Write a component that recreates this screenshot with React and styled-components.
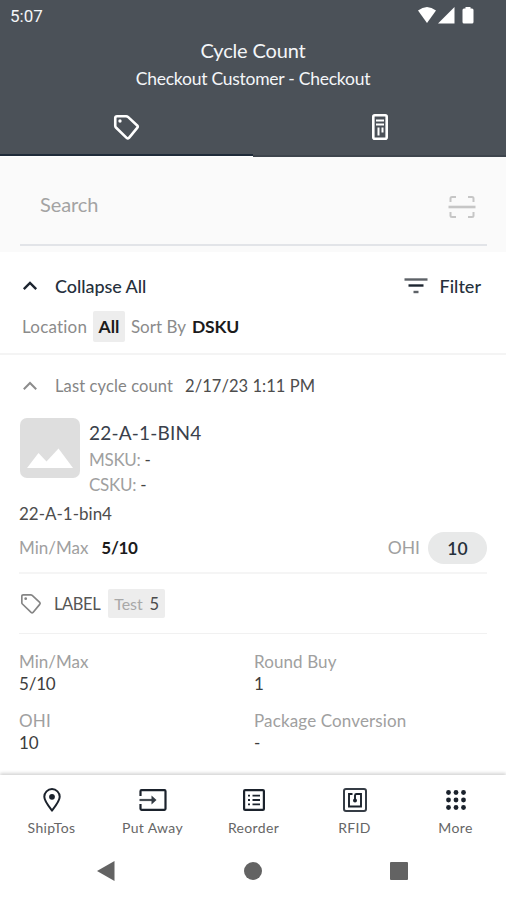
import styled, { createGlobalStyle } from 'styled-components';

const navItems = [
	{ label: 'ShipTos', icon: <PinIcon /> },
	{ label: 'Put Away', icon: <PutAwayIcon /> },
	{ label: 'Reorder', icon: <ReorderIcon /> },
	{ label: 'RFID', icon: <RfidIcon /> },
	{ label: 'More', icon: <MoreIcon /> },
];

const details = [
	{ label: 'Min/Max', value: '5/10', ls: 0 },
	{ label: 'Round Buy', value: '1', ls: 0.1 },
	{ label: 'OHI', value: '10', ls: 0.2 },
	{ label: 'Package Conversion', value: '-', ls: 0.14 },
];

function App() {
	return (
		<Screen>
			<GlobalStyle />
			<Header>
				<StatusBar>
					<Clock>5:07</Clock>
					<StatusIcons />
				</StatusBar>
				<Title>Cycle Count</Title>
				<Subtitle>Checkout Customer - Checkout</Subtitle>
			</Header>
			<Tabs>
				<Tab $active>
					<TagIcon size={27} stroke="#fff" width={2.3} />
				</Tab>
				<Tab>
					<BinIcon />
				</Tab>
			</Tabs>

			<SearchArea>
				<SearchField>
					<Text $size={20} $ls={-0.1} $color="#a3a3a3">Search</Text>
					<ScanIcon />
				</SearchField>
			</SearchArea>

			<Toolbar>
				<Chevron color="#1c2530" width={2.4} />
				<Text $size={18} $ls={-0.05} $weight={500} $color="#26303c">Collapse All</Text>
				<FilterButton>
					<FilterIcon />
					<Text $size={18} $weight={500} $color="#26303c">Filter</Text>
				</FilterButton>
			</Toolbar>
			<SortRow>
				<Text $size={17} $ls={0.2} $color="#8b8b8b">Location</Text>
				<Chip $h={31} $pad={5.5}>
					<Text $size={17.5} $weight={700} $color="#1b1b1b">All</Text>
				</Chip>
				<Text $size={17} $color="#8b8b8b">Sort By</Text>
				<Text $size={17.5} $ls={-0.2} $weight={700} $color="#1b1b1b">DSKU</Text>
			</SortRow>

			<Card>
				<CountRow>
					<Chevron color="#8c8c8c" width={2} />
					<Text $size={16.5} $ls={0.12} $color="#858585">Last cycle count</Text>
					<Text $size={16.5} $ls={0.05} $color="#4d4d4d">2/17/23 1:11 PM</Text>
				</CountRow>
				<Product>
					<Placeholder />
					<ProductInfo>
						<Text $size={19} $ls={0.2} $lh={29} $color="#3a414b">22-A-1-BIN4</Text>
						<Sku>MSKU: <b>-</b></Sku>
						<Sku>CSKU: <b>-</b></Sku>
					</ProductInfo>
				</Product>
				<Text $size={17} $lh={30} $color="#4d4d4d">22-A-1-bin4</Text>
				<StockRow>
					<Text $size={17} $color="#a0a0a0">Min/Max</Text>
					<Text $size={17} $ls={-0.3} $weight={700} $color="#1b1b1b">5/10</Text>
					<Stock>
						<Text $size={17.5} $color="#a0a0a0">OHI</Text>
						<Pill>10</Pill>
					</Stock>
				</StockRow>
				<LabelRow>
					<TagIcon size={22} stroke="#858585" width={1.8} />
					<Text $size={16.5} $ls={-0.4} $color="#555">LABEL</Text>
					<Chip $h={29} $pad={6}>
						<Text $size={16} $ls={-0.1} $color="#a8a8a8">Test</Text>
						<Text $size={16.5} $color="#4a4a4a">5</Text>
					</Chip>
				</LabelRow>
				<Details>
					{details.map((d) => (
						<Detail key={d.label}>
							<Text $size={17} $ls={d.ls} $lh={22} $color="#a0a0a0">{d.label}</Text>
							<Text $size={17} $ls={-0.2} $lh={22} $color="#3d3d3d">{d.value}</Text>
						</Detail>
					))}
				</Details>
			</Card>

			<BottomNav>
				{navItems.map((item) => (
					<NavItem key={item.label}>
						{item.icon}
						<span>{item.label}</span>
					</NavItem>
				))}
			</BottomNav>
			<SystemNav>
				<svg width="18" height="20"><path d="M0 10 17.5 0v20z" fill="#636363" /></svg>
				<svg width="18" height="18"><circle cx="9" cy="9" r="9" fill="#636363" /></svg>
				<svg width="18" height="18"><rect width="18" height="18" rx="1" fill="#636363" /></svg>
			</SystemNav>
		</Screen>
	);
}

export default App;

/* icons */

function StatusIcons() {
	return (
		<svg width="56" height="18" viewBox="0 0 56 18" fill="#fff">
			<path d="M0 3.500Q9-3.500 18 3.500L9 16z" />
			<path d="M36.500 0v16.500H20z" />
			<path d="M44.500 3q0-1.500 1.500-1.500h1.500V0h5v1.500H54q1.500 0 1.500 1.500v12q0 1.500-1.500 1.500h-8q-1.500 0-1.500-1.500z" />
		</svg>
	);
}

function TagIcon({ size, stroke, width }) {
	return (
		<svg width={size} height={size} viewBox="0 0 24 24" fill="none" stroke={stroke} strokeWidth={width} strokeLinejoin="round">
			<path d="M2 3.500Q2 2 3.500 2h8.200q.9 0 1.600.6l8.200 7.600q1 1.100 0 2.200l-7.300 8.800q-1 1-2.100 0l-9.500-9.200q-.6-.6-.6-1.500z" />
			<circle cx="6.200" cy="6.200" r="1.500" fill={stroke} stroke="none" />
		</svg>
	);
}

function BinIcon() {
	return (
		<svg width="16" height="26" viewBox="0 0 16 26" fill="none" stroke="#fff">
			<rect x="1.300" y="1.300" width="13.400" height="23.400" rx="1.500" strokeWidth="2.600" />
			<path d="M4 6.500h8M4 10.500h8" strokeWidth="1.800" />
			<path d="M6.500 13.500v8M10.500 13.500v5" strokeWidth="2" />
		</svg>
	);
}

function ScanIcon() {
	return (
		<svg width="28" height="24" viewBox="0 0 28 24" fill="none" stroke="#c6c6c6" strokeWidth="2">
			<path d="M2.500 7V3.500q0-1.500 1.500-1.500H8M20 2h4q1.500 0 1.500 1.500V7M25.500 17v3.500q0 1.500-1.500 1.500h-4M8 22H4q-1.500 0-1.500-1.500V17" />
			<path d="M.5 12h27" strokeWidth="2.600" />
		</svg>
	);
}

function Chevron({ color, width }) {
	return (
		<svg width="16" height="10" viewBox="0 0 16 10" fill="none" stroke={color} strokeWidth={width}>
			<path d="M1.800 8.200 8 2l6.200 6.200" />
		</svg>
	);
}

function FilterIcon() {
	return (
		<svg width="24" height="18" viewBox="0 0 24 18" fill="none" strokeWidth="2.400">
			<path d="M.5 2.500h23" stroke="#5d6267" />
			<path d="M4.500 8.500h15" stroke="#1c2530" />
			<path d="M9.500 15h5" stroke="#5d6267" />
		</svg>
	);
}

function Placeholder() {
	return (
		<svg width="60" height="60" viewBox="0 0 60 60">
			<rect width="60" height="60" rx="7" fill="#dedede" />
			<path d="M7 50 18.500 35l8 8.500L38.500 30.500 53 50z" fill="#fff" />
		</svg>
	);
}

function PinIcon() {
	return (
		<svg width="18" height="24" viewBox="0 0 18 24" fill="none" stroke="#1b222c" strokeWidth="2">
			<path d="M9 22.500C5 17.500 1.300 13 1.300 8.800a7.700 7.700 0 0 1 15.400 0C16.700 13 13 17.500 9 22.500z" />
			<circle cx="9" cy="8.800" r="2.900" fill="#1b222c" stroke="none" />
		</svg>
	);
}

function PutAwayIcon() {
	return (
		<svg width="28" height="22" viewBox="0 0 28 22" fill="none" stroke="#1b222c" strokeWidth="2.200">
			<path d="M1.500 7V2.200q0-1 1-1h23q1 0 1 1v17.600q0 1-1 1h-23q-1 0-1-1V15" />
			<path d="M.5 11H16" stroke="#454b52" />
			<path d="M12.500 6.500 17.500 11l-5 4.500z" fill="#333a42" stroke="none" />
		</svg>
	);
}

function ReorderIcon() {
	return (
		<svg width="22" height="22" viewBox="0 0 22 22" fill="none" stroke="#1b222c" strokeWidth="2.200">
			<rect x="1.100" y="1.100" width="19.800" height="19.800" rx="1" />
			<path d="M5 6.700h2M5 11h2M5 15.300h2M9.500 6.700H17M9.500 11H17M9.500 15.300H17" strokeWidth="1.800" />
		</svg>
	);
}

function RfidIcon() {
	return (
		<svg width="24" height="24" viewBox="0 0 24 24" fill="none" stroke="#1b222c" strokeWidth="2">
			<rect x="1" y="1" width="22" height="22" rx="2" stroke="#353c45" />
			<path d="M9.500 6H6v12.500h12V6h-4.500q-1.500 0-1.500 1.500V12" strokeWidth="1.900" />
			<circle cx="12" cy="12.500" r="2" fill="#1b222c" stroke="none" />
		</svg>
	);
}

function MoreIcon() {
	return (
		<svg width="20" height="20" viewBox="0 0 20 20" fill="#1b222c">
			{[2.5, 10, 17.5].map((y) =>
				[2.5, 10, 17.5].map((x) => <circle key={`${x}-${y}`} cx={x} cy={y} r="2.400" />)
			)}
		</svg>
	);
}

/* styles */

const GlobalStyle = createGlobalStyle`
	* {
		box-sizing: border-box;
	}
	body {
		margin: 0;
		background: #fff;
		font-family: Lato, 'Liberation Sans', sans-serif;
	}
	svg {
		display: block;
		flex: none;
	}
`;

const Screen = styled.div`
	display: flex;
	flex-direction: column;
	width: 506px;
	height: 900px;
	overflow: hidden;
	background: #fff;
`;

const Text = styled.span`
	display: block;
	font-size: ${(p) => p.$size}px;
	font-weight: ${(p) => p.$weight || 400};
	letter-spacing: ${(p) => p.$ls || 0}px;
	line-height: ${(p) => p.$lh || 24}px;
	color: ${(p) => p.$color};
	white-space: nowrap;
`;

const Header = styled.header`
	height: 100px;
	background: #4b5158;
	color: #f4f6f8;
	text-align: center;
`;

const StatusBar = styled.div`
	display: flex;
	justify-content: space-between;
	height: 35px;
	padding: 7px 32px 0 10px;
`;

const Clock = styled.span`
	font-family: Roboto, sans-serif;
	font-size: 17px;
	line-height: 18px;
`;

const Title = styled.div`
	font-size: 20px;
	line-height: 30px;
	letter-spacing: -0.15px;
`;

const Subtitle = styled.div`
	font-size: 17.5px;
	line-height: 28px;
	letter-spacing: -0.25px;
`;

const Tabs = styled.div`
	display: flex;
	align-items: flex-start;
	height: 57px;
`;

const Tab = styled.div`
	display: flex;
	justify-content: center;
	width: 253px;
	height: ${(p) => (p.$active ? 56 : 57)}px;
	padding-top: 14px;
	background: #4b5158;
	border-bottom: 2px solid ${(p) => (p.$active ? '#1f2b39' : '#3e454d')};
`;

const SearchArea = styled.div`
	height: 95px;
	padding: 0 19px 0 20px;
	background: #fafafa;
`;

const SearchField = styled.div`
	display: flex;
	align-items: center;
	justify-content: space-between;
	height: 89px;
	padding: 7px 11px 0 20px;
	border-bottom: 2px solid #e2e4e8;
	svg {
		margin-top: 6px;
	}
`;

const Toolbar = styled.div`
	display: flex;
	align-items: center;
	gap: 17px;
	height: 56px;
	padding: 11px 25px 0 22px;
`;

const FilterButton = styled.div`
	display: flex;
	align-items: center;
	gap: 12px;
	margin-left: auto;
`;

const SortRow = styled.div`
	display: flex;
	align-items: center;
	gap: 6px;
	height: 47px;
	padding: 0 22px 8px;
	border-bottom: 2px solid #f4f4f4;
`;

const Chip = styled.div`
	display: flex;
	align-items: center;
	gap: 7px;
	height: ${(p) => p.$h}px;
	padding: 0 ${(p) => p.$pad}px;
	background: #ededed;
	border-radius: 2px;
`;

const Card = styled.main`
	flex: 1;
	padding: 0 19px;
`;

const CountRow = styled.div`
	display: flex;
	align-items: center;
	height: 63px;
	padding-left: 3px;
	padding-bottom: 1px;
	svg {
		margin-right: 17px;
	}
	span + span {
		margin-left: 12px;
	}
`;

const Product = styled.div`
	display: flex;
	align-items: flex-start;
	gap: 9px;
	height: 81px;
	padding: 0 0 0 1px;
`;

const ProductInfo = styled.div`
	display: flex;
	flex-direction: column;
`;

const Sku = styled.div`
	font-size: 17px;
	line-height: 25px;
	letter-spacing: -0.3px;
	color: #a0a0a0;
	b {
		font-weight: 400;
		color: #444;
	}
`;

const StockRow = styled.div`
	display: flex;
	align-items: center;
	gap: 13px;
	height: 45px;
	padding-bottom: 6px;
	border-bottom: 2px solid #f5f5f5;
`;

const Stock = styled.div`
	display: flex;
	align-items: center;
	gap: 8px;
	margin-left: auto;
`;

const Pill = styled.div`
	width: 59px;
	height: 32px;
	border-radius: 16px;
	background: #e8e9e9;
	color: #26303a;
	font-size: 17.5px;
	font-weight: 600;
	line-height: 33px;
	text-align: center;
`;

const LabelRow = styled.div`
	display: flex;
	align-items: center;
	height: 60px;
	padding-left: 1px;
	border-bottom: 1px solid #f1f1f1;
	> span {
		margin: 0 8px 0 12px;
	}
`;

const Details = styled.div`
	display: grid;
	grid-template-columns: 235px 1fr;
	row-gap: 15px;
	padding-top: 17px;
`;

const Detail = styled.div`
	display: flex;
	flex-direction: column;
`;

const BottomNav = styled.nav`
	display: grid;
	grid-template-columns: repeat(5, 1fr);
	height: 67px;
	padding: 13px 0 0 1px;
	box-shadow: 0 -2px 3px rgba(0, 0, 0, 0.16);
`;

const NavItem = styled.div`
	display: flex;
	flex-direction: column;
	align-items: center;
	color: #666;
	font-size: 14px;
	line-height: 18px;
	letter-spacing: 0.35px;
	svg {
		height: 24px;
		margin-bottom: 7px;
	}
`;

const SystemNav = styled.div`
	display: flex;
	align-items: center;
	justify-content: space-between;
	height: 58px;
	padding: 0 98px 0 97px;
	background: #fff;
`;
